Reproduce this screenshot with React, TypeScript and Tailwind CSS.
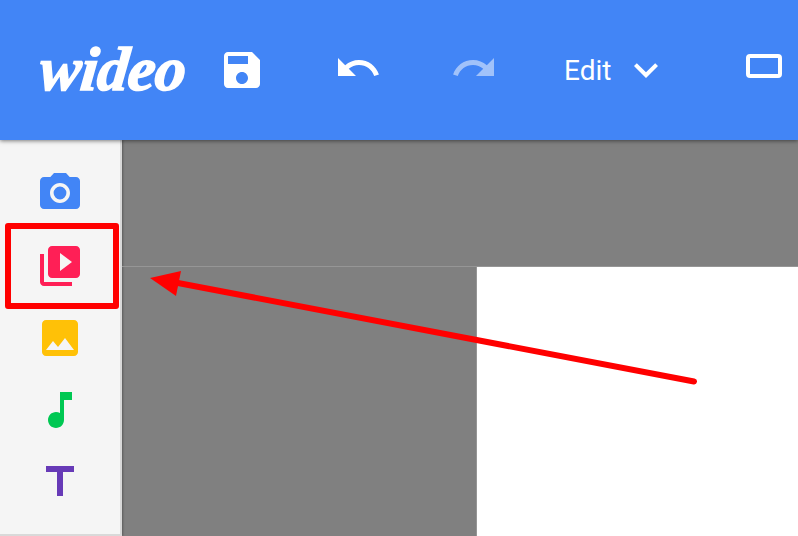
function Icon({ d, className = '' }: { d: string; className?: string }) {
  return (
    <svg viewBox="0 0 24 24" className={`w-12 h-12 shrink-0 fill-current ${className}`}>
      <path d={d} />
    </svg>
  );
}

const SAVE = 'M17 3H5c-1.11 0-2 .9-2 2v14c0 1.1.89 2 2 2h14c1.1 0 2-.9 2-2V7l-4-4zm-5 16c-1.66 0-3-1.34-3-3s1.34-3 3-3 3 1.34 3 3-1.34 3-3 3zm3-10H5V5h10v4z';
const UNDO = 'M12.5 8c-2.65 0-5.05.99-6.9 2.6L2 7v9h9l-3.62-3.62c1.39-1.16 3.16-1.88 5.12-1.88 3.54 0 6.55 2.31 7.6 5.5l2.37-.78C21.08 11.03 17.15 8 12.5 8z';
const REDO = 'M18.4 10.6C16.55 8.99 14.15 8 11.5 8c-4.65 0-8.58 3.03-9.96 7.22L3.9 16c1.05-3.19 4.05-5.5 7.6-5.5 1.95 0 3.73.72 5.12 1.88L13 16h9V7l-3.6 3.6z';
const CHEVRON = 'M16.59 8.59L12 13.17 7.41 8.59 6 10l6 6 6-6z';
const CAMERA = 'M12 8.8a3.2 3.2 0 1 0 0 6.4 3.2 3.2 0 0 0 0-6.4zM9 2L7.17 4H4c-1.1 0-2 .9-2 2v12c0 1.1.9 2 2 2h16c1.1 0 2-.9 2-2V6c0-1.1-.9-2-2-2h-3.17L15 2H9zm3 15c-2.76 0-5-2.24-5-5s2.24-5 5-5 5 2.24 5 5-2.24 5-5 5z';
const VIDEO = 'M4 6H2v14c0 1.1.9 2 2 2h14v-2H4V6zm16-4H8c-1.1 0-2 .9-2 2v12c0 1.1.9 2 2 2h12c1.1 0 2-.9 2-2V4c0-1.1-.9-2-2-2zm-8 12.5v-9l6 4.5-6 4.5z';
const IMAGE = 'M21 19V5c0-1.1-.9-2-2-2H5c-1.1 0-2 .9-2 2v14c0 1.1.9 2 2 2h14c1.1 0 2-.9 2-2zM8.5 13.5l2.5 3.01L14.5 12l4.5 6H5l3.5-4.5z';
const MUSIC = 'M12 3v10.55c-.59-.34-1.27-.55-2-.55-2.21 0-4 1.79-4 4s1.79 4 4 4 4-1.79 4-4V7h4V3h-6z';
const TITLE = 'M5 4v3h5.5v12h3V7H19V4z';

export default function App() {
  return (
    <div className="relative w-[798px] h-[536px] overflow-hidden flex flex-col bg-[#808080] font-['Roboto',sans-serif]">
      {/* Top bar */}
      <header className="relative z-10 h-[140px] shrink-0 bg-[#4285f6] text-white flex items-center shadow-[0_1px_4px_rgba(0,0,0,0.5)] pl-10">
        <div className="w-[178px] shrink-0 -mt-[2px]">
          <span className="inline-block -ml-[3px] origin-bottom-left -skew-x-6 font-['Liberation_Serif',serif] font-bold italic text-[62px] leading-none tracking-[-0.5px] [-webkit-text-stroke:1.5px_white]">
            wideo
          </span>
        </div>
        <Icon d={SAVE} />
        <Icon d={UNDO} className="ml-[68px] -mt-[4px]" />
        <Icon d={REDO} className="ml-[68px] -mt-[4px] opacity-50" />
        <span className="ml-[66px] mt-[2px] text-[28px] leading-none w-[58px]">Edit</span>
        <Icon d={CHEVRON} />
        <div className="ml-[76px] -mt-[8px] w-9 h-6 shrink-0 border-4 border-white rounded-[4px]" />
      </header>

      <div className="flex flex-1 min-h-0">
        {/* Left tool rail */}
        <aside className="w-[122px] shrink-0 bg-[#f5f5f5] border-r-2 border-b-2 border-[#d9d9d9] flex flex-col items-center gap-6 pt-[29px] shadow-[1px_0_2px_rgba(0,0,0,0.3)]">
          <Icon d={CAMERA} className="text-[#4285f6]" />
          <Icon d={VIDEO} className="text-[#ff1f56] mt-px" />
          <Icon d={IMAGE} className="text-[#ffc107]" />
          <Icon d={MUSIC} className="text-[#00c853]" />
          <Icon d={TITLE} className="text-[#673ab7]" />
        </aside>

        {/* Stage */}
        <main className="flex-1 flex flex-col pt-[126px]">
          <div className="flex flex-1 border-t border-[#969696]">
            <div className="w-[355px] shrink-0 border-r border-[#969696]" />
            <div className="flex-1 bg-white" />
          </div>
        </main>
      </div>

      {/* Red annotation */}
      <div className="absolute z-20 left-[5px] top-[223px] w-[114px] h-[86px] border-[6px] border-[#ff0000] rounded-[3px]" />
      <svg className="absolute z-20 left-0 top-0 w-[798px] h-[536px] pointer-events-none" viewBox="0 0 798 536">
        <path d="M178 283L694 381.5" stroke="#ff0000" strokeWidth="6" strokeLinecap="round" fill="none" />
        <path d="M150 278L181 271L176 296Z" fill="#ff0000" />
      </svg>
    </div>
  );
}
